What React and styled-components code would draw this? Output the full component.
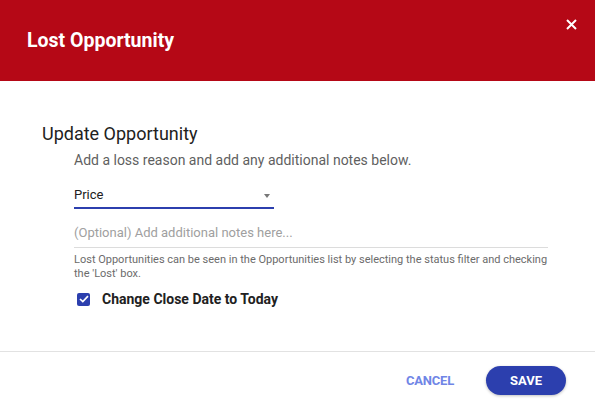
import styled, { createGlobalStyle } from "styled-components";

const GlobalStyle = createGlobalStyle`
  body {
    margin: 0;
    background: #fff;
    font-family: Roboto, "Liberation Sans", sans-serif;
  }
  * {
    box-sizing: border-box;
  }
`

const Dialog = styled.div`
  width: 595px;
  height: 407px;
  display: flex;
  flex-direction: column;
  background: #fff;
  overflow: hidden;
`

const Header = styled.header`
  height: 81px;
  flex: none;
  background: #b50816;
  display: flex;
  align-items: center;
  justify-content: space-between;
  padding: 0 13px 0 27px;
`

const Title = styled.h1`
  margin: 0;
  color: #fff;
  font-size: 19.5px;
  font-weight: 700;
  line-height: 24px;
`

const CloseButton = styled.button`
  align-self: flex-start;
  margin-top: 13px;
  width: 22px;
  height: 22px;
  padding: 0;
  border: 0;
  background: none;
  display: flex;
  align-items: center;
  justify-content: center;
  cursor: pointer;
`

const Body = styled.main`
  flex: 1;
  padding: 43px 42px 0;
`

const SectionTitle = styled.h2`
  margin: 0;
  color: #212121;
  font-size: 18px;
  font-weight: 400;
  line-height: 20px;
`

const Fields = styled.div`
  margin-left: 32px;
  width: 474px;
`

const Intro = styled.p`
  margin: 6px 0 0;
  color: #5f5f5f;
  font-size: 14px;
  line-height: 20px;
`

const Select = styled.div`
  margin-top: 15px;
  width: 200px;
  padding: 0 4px 2px 0;
  display: flex;
  align-items: center;
  justify-content: space-between;
  border-bottom: 2px solid #2c3fae;
  color: #212121;
  font-size: 13px;
  line-height: 20px;
`

const Caret = styled.span`
  width: 0;
  height: 0;
  margin-top: 2px;
  border-left: 3.5px solid transparent;
  border-right: 3.5px solid transparent;
  border-top: 4px solid #777;
`

const Notes = styled.div`
  margin-top: 14px;
  padding-bottom: 4px;
  border-bottom: 1px solid #dcdcdc;
  color: #a0a0a0;
  font-size: 13px;
  line-height: 20px;
`

const Helper = styled.p`
  margin: 5px 0 0;
  color: #6b6b6b;
  font-size: 11px;
  line-height: 14px;
`

const CheckRow = styled.label`
  margin-top: 8px;
  padding-left: 3px;
  display: flex;
  align-items: center;
  gap: 12px;
  color: #212121;
  font-size: 14px;
  font-weight: 700;
  line-height: 20px;
`

const CheckBox = styled.span`
  width: 13px;
  height: 13px;
  border-radius: 2px;
  background: #2c3fae;
  display: flex;
  align-items: center;
  justify-content: center;
`

const Footer = styled.footer`
  height: 56px;
  flex: none;
  border-top: 1px solid #e2e2e2;
  display: flex;
  align-items: center;
  justify-content: flex-end;
  gap: 24px;
  padding: 2px 29px 0 0;
`

const TextButton = styled.button`
  border: 0;
  background: none;
  padding: 0 8px;
  color: #7085e6;
  font-family: inherit;
  font-size: 13px;
  font-weight: 700;
  letter-spacing: -0.2px;
  cursor: pointer;
`

const PrimaryButton = styled.button`
  width: 80px;
  height: 29px;
  border: 0;
  border-radius: 15px;
  background: #2c3fae;
  box-shadow: 0 1px 3px rgba(0, 0, 0, 0.25);
  color: #fff;
  font-family: inherit;
  font-size: 13px;
  font-weight: 700;
  cursor: pointer;
`

const App = () => {
  return (
    <Dialog>
      <GlobalStyle />
      <Header>
        <Title>Lost Opportunity</Title>
        <CloseButton aria-label="Close">
          <svg width="11" height="11" viewBox="0 0 11 11">
            <path d="M1 1L10 10M10 1L1 10" stroke="#fff" strokeWidth="2" />
          </svg>
        </CloseButton>
      </Header>
      <Body>
        <SectionTitle>Update Opportunity</SectionTitle>
        <Fields>
          <Intro>Add a loss reason and add any additional notes below.</Intro>
          <Select>
            Price
            <Caret />
          </Select>
          <Notes>(Optional) Add additional notes here...</Notes>
          <Helper>
            Lost Opportunities can be seen in the Opportunities list by selecting the status filter and checking the 'Lost' box.
          </Helper>
          <CheckRow>
            <CheckBox>
              <svg width="10" height="8" viewBox="0 0 10 8">
                <path d="M1 4L3.8 6.6L9 1.2" fill="none" stroke="#fff" strokeWidth="1.7" />
              </svg>
            </CheckBox>
            Change Close Date to Today
          </CheckRow>
        </Fields>
      </Body>
      <Footer>
        <TextButton>CANCEL</TextButton>
        <PrimaryButton>SAVE</PrimaryButton>
      </Footer>
    </Dialog>
  )
}

export default App
